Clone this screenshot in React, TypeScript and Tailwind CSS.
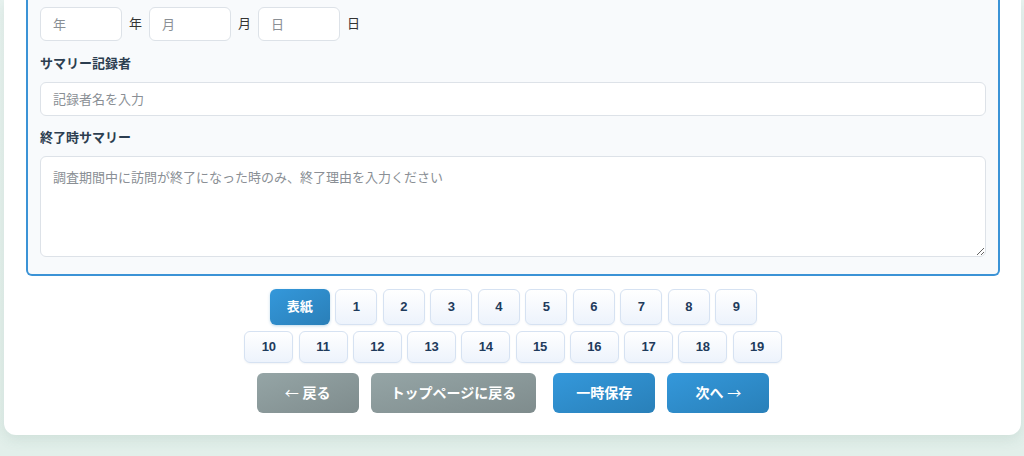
import React from 'react';

const pagesRow1 = ['1', '2', '3', '4', '5', '6', '7', '8', '9'];
const pagesRow2 = ['10', '11', '12', '13', '14', '15', '16', '17', '18', '19'];

const pageBtn =
    'flex items-center justify-center rounded-md border border-[#d6e2f2] bg-gradient-to-b from-white to-[#edf3fc] text-[13px] font-bold text-[#1f3b5c] shadow-[0_1px_2px_rgba(30,60,110,0.06)]';

const field =
    'rounded-md border border-[#dde2e8] bg-white pl-3 text-[13px] placeholder:text-[#8a8f95] outline-none';

export default function App() {
    return (
        <div className="h-[456px] overflow-hidden bg-gradient-to-b from-[#e9f3f0] to-[#e2efea] font-['Liberation_Sans','Noto_Sans_CJK_JP',sans-serif]">
            {/* Card */}
            <div className="ml-[4px] mr-[3px] rounded-b-xl bg-white pl-[22px] pr-[21px] pb-[22px] shadow-[0_4px_14px_rgba(60,110,90,0.12)]">
                {/* Form section (scrolled, top cut off) */}
                <div className="rounded-b-md border-2 border-t-0 border-[#3b93d6] bg-[#f8fafc] px-3 pt-[7px] pb-[17px]">
                    <div className="flex items-center gap-[7px] text-[13px] text-[#333]">
                        <input className={`${field} h-[34px] w-[82px]`} placeholder="年" />
                        <span>年</span>
                        <input className={`${field} h-[34px] w-[82px]`} placeholder="月" />
                        <span>月</span>
                        <input className={`${field} h-[34px] w-[82px]`} placeholder="日" />
                        <span>日</span>
                    </div>

                    <div className="mt-[13px]">
                        <div className="mb-2 h-[20px] text-[13px] font-bold leading-[20px] text-[#2c3e50]">サマリー記録者</div>
                        <input className={`${field} block h-[34px] w-full`} placeholder="記録者名を入力" />
                    </div>

                    <div className="mt-3">
                        <div className="mb-2 h-[20px] text-[13px] font-bold leading-[20px] text-[#2c3e50]">終了時サマリー</div>
                        <textarea
                            className={`${field} block h-[101px] w-full pr-3 pt-[11px] leading-[20px]`}
                            placeholder="調査期間中に訪問が終了になった時のみ、終了理由を入力ください"
                        />
                    </div>
                </div>

                {/* Pagination */}
                <div className="mt-[13px] flex flex-col items-center gap-[6px]">
                    <div className="flex gap-[5.5px] pl-[1px]">
                        <button className="flex h-[36px] w-[60px] items-center justify-center rounded-md bg-gradient-to-br from-[#3498db] to-[#2a7fb8] text-[13px] font-bold text-white shadow-[0_1px_3px_rgba(41,128,185,0.3)]">
                            表紙
                        </button>
                        {pagesRow1.map(p => (
                            <button key={p} className={`${pageBtn} h-[36px] w-[42px]`}>{p}</button>
                        ))}
                    </div>
                    <div className="flex gap-[5.25px]">
                        {pagesRow2.map(p => (
                            <button key={p} className={`${pageBtn} h-[32px] w-[49px]`}>{p}</button>
                        ))}
                    </div>
                </div>

                {/* Nav buttons */}
                <div className="mt-[10px] flex justify-center gap-3">
                    <button className="h-[40px] min-w-[102px] rounded-md bg-gradient-to-br from-[#95a5a6] to-[#7f8c8d] px-5 text-[14px] font-bold text-white">
                        <span className="font-['Noto_Sans_CJK_JP',sans-serif] font-normal">←</span> 戻る
                    </button>
                    <button className="h-[40px] min-w-[102px] rounded-md bg-gradient-to-br from-[#95a5a6] to-[#7f8c8d] px-5 text-[14px] font-bold text-white">
                        トップページに戻る
                    </button>
                    <button className="ml-[5px] h-[40px] min-w-[102px] rounded-md bg-gradient-to-br from-[#3498db] to-[#2980b9] px-5 text-[14px] font-bold text-white">
                        一時保存
                    </button>
                    <button className="h-[40px] min-w-[102px] rounded-md bg-gradient-to-br from-[#3498db] to-[#2980b9] px-5 text-[14px] font-bold text-white">
                        次へ <span className="font-['Noto_Sans_CJK_JP',sans-serif] font-normal">→</span>
                    </button>
                </div>
            </div>
        </div>
    );
}
